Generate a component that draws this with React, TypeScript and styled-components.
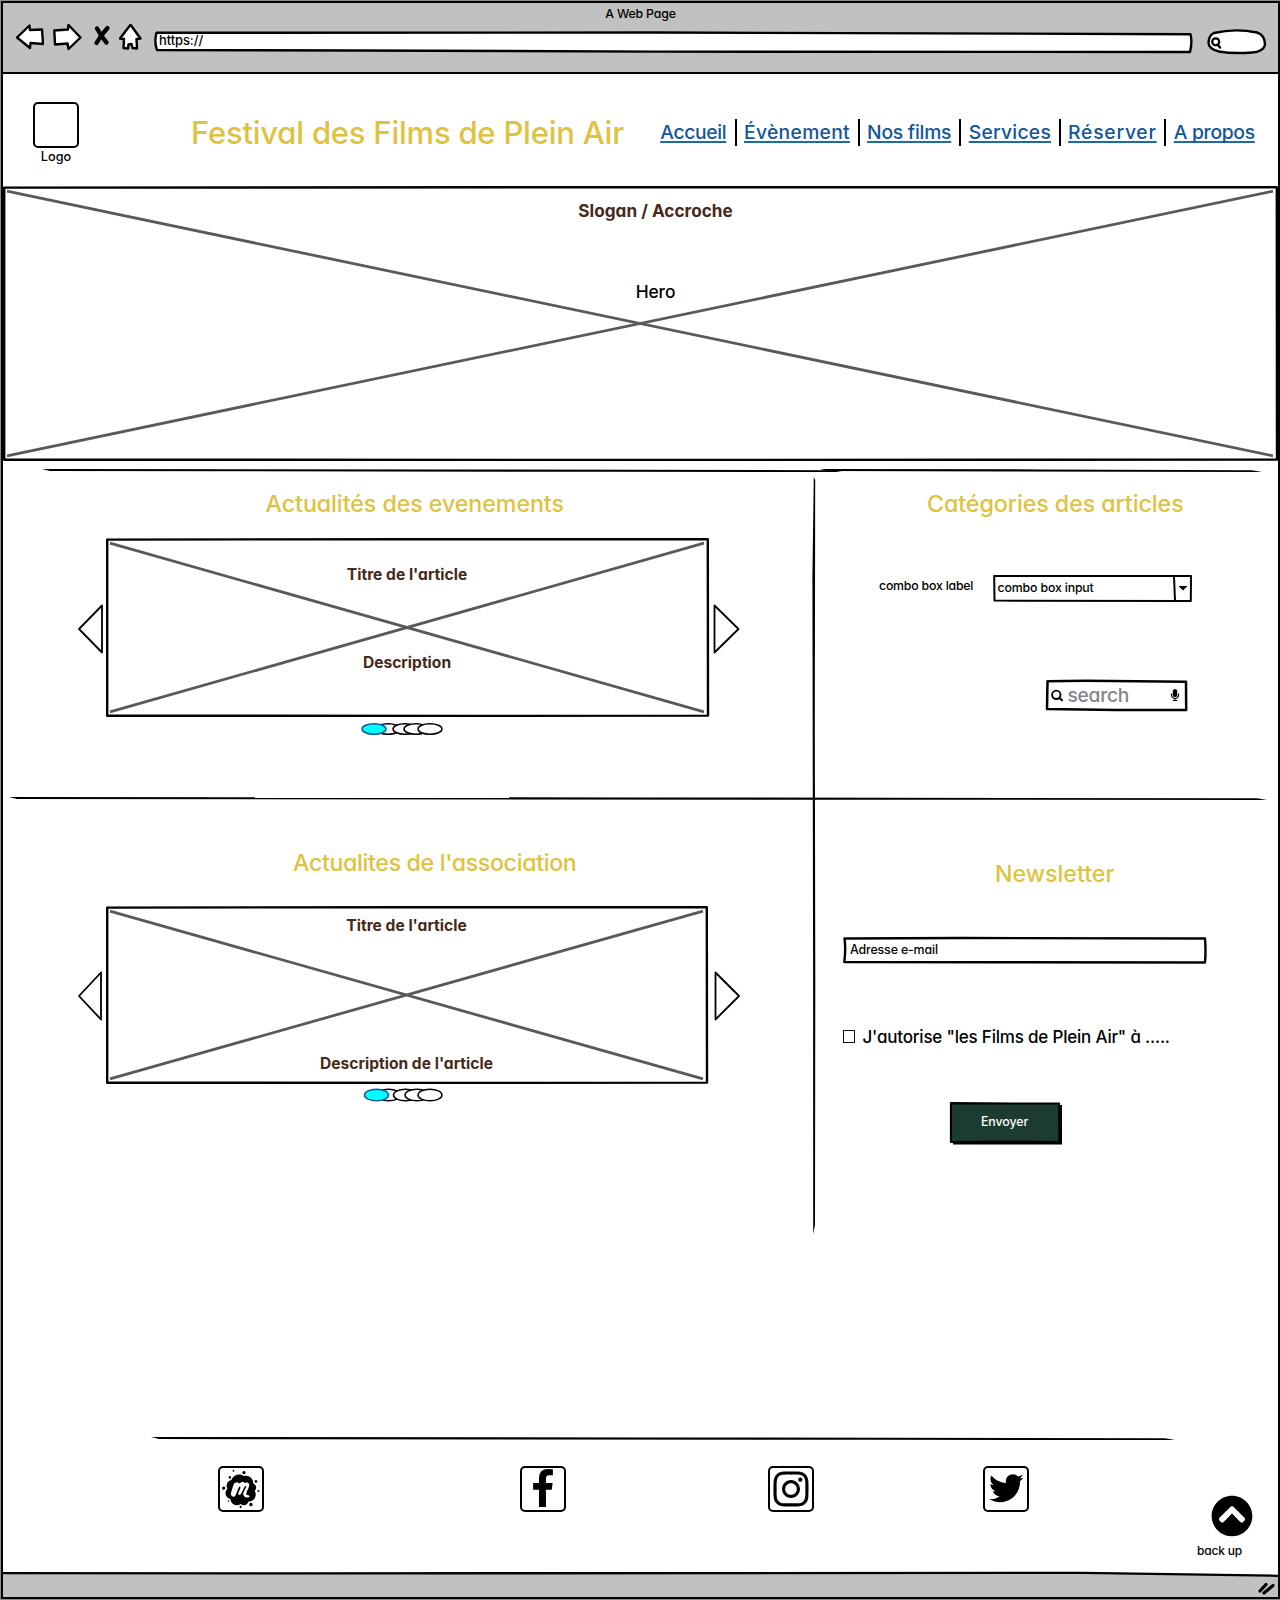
import React from "react";
import styled, { createGlobalStyle } from "styled-components";
import { FaMeetup, FaInstagram, FaTwitter, FaChevronCircleUp, FaMicrophone } from "react-icons/fa";

const ink = "#000";
const gold = "#dfc240";
const brown = "#46291a";

const Global = createGlobalStyle`
  *, *::before, *::after { box-sizing: border-box; }
  body {
    margin: 0;
    background: #8b8d8b;
    color: ${ink};
    font-family: Inter, "Liberation Sans", sans-serif;
    font-feature-settings: "cv11" 1;
  }
  svg { display: block; }
`;

/* ---------- text ---------- */

const Text = styled.span<{ $size?: number; $line?: number; $track?: number; $color?: string; $weight?: number }>`
  display: block;
  white-space: nowrap;
  font-size: ${(p) => p.$size ?? 12.5}px;
  line-height: ${(p) => p.$line ?? 16}px;
  letter-spacing: ${(p) => p.$track ?? 0}px;
  color: ${(p) => p.$color ?? ink};
  font-weight: ${(p) => p.$weight ?? 500};
`;

const Heading = styled.h2<{ $left: number; $track?: number }>`
  margin: 0 0 0 ${(p) => p.$left}px;
  white-space: nowrap;
  font-size: 23.2px;
  font-weight: 500;
  line-height: 32px;
  letter-spacing: ${(p) => p.$track ?? 0}px;
  color: ${gold};
`;

/* ---------- window ---------- */

const Window = styled.div`
  width: 1279px;
  height: 1598px;
  margin: 1px 0 1px 1px;
  display: flex;
  flex-direction: column;
  border: 2px solid ${ink};
  background: #fff;
`;

const Chrome = styled.header`
  height: 71px;
  flex: none;
  background: #c1c1c1;
  border-bottom: 2px solid ${ink};
`;

const WindowTitle = styled(Text)`
  text-align: center;
`;

const Toolbar = styled.div`
  display: flex;
  align-items: flex-start;
  padding-left: 12px;
`;

const ToolIcon = styled.svg<{ $gap?: number }>`
  flex: none;
  margin-left: ${(p) => p.$gap ?? 0}px;
  fill: #fff;
  stroke: ${ink};
  stroke-width: 2.4;
  stroke-linejoin: round;
  stroke-linecap: round;
`;

const Field = styled.div<{ $w: number; $h: number; $pad?: string }>`
  position: relative;
  flex: none;
  display: flex;
  align-items: center;
  width: ${(p) => p.$w}px;
  height: ${(p) => p.$h}px;
  padding: ${(p) => p.$pad ?? "0"};
  > * { position: relative; }
`;

const SketchSvg = styled.svg`
  && { position: absolute; }
  left: 0;
  top: 0;
  overflow: visible;
  stroke-linejoin: round;
  stroke-linecap: round;
`;

function Sketch({ w, h, d, fill = "#fff", stroke = 2.4, children }: {
  w: number; h: number; d: string; fill?: string; stroke?: number; children?: React.ReactNode;
}) {
  return (
    <SketchSvg width={w} height={h} aria-hidden>
      <path d={d} fill={fill} stroke={ink} strokeWidth={stroke} />
      {children}
    </SketchSvg>
  );
}

/* ---------- site header ---------- */

const SiteHeader = styled.div`
  height: 112px;
  flex: none;
  display: flex;
  align-items: flex-start;
  padding-left: 30px;
`;

const Brand = styled.div`
  width: 46px;
  padding-top: 28px;
  display: flex;
  flex-direction: column;
  align-items: center;
`;

const IconTile = styled.div<{ $w?: number; $lift?: number }>`
  width: ${(p) => p.$w ?? 46}px;
  height: 46px;
  flex: none;
  display: flex;
  align-items: center;
  justify-content: center;
  padding-bottom: ${(p) => p.$lift ?? 0}px;
  border: 2px solid ${ink};
  border-radius: 5px;
`;

const SiteTitle = styled.h1`
  width: 461px;
  margin: 39px 0 0 112px;
  white-space: nowrap;
  font-size: 31px;
  line-height: 40px;
  font-weight: 500;
  letter-spacing: -0.22px;
  color: ${gold};
`;

const Nav = styled.nav`
  display: grid;
  grid-template-columns: 82.5px 123px 101.3px 100.2px 104.8px 99px;
  height: 27px;
  margin-top: 45px;
`;

const NavItem = styled.a<{ $track: number }>`
  text-align: center;
  white-space: nowrap;
  font-size: 19.3px;
  line-height: 27px;
  letter-spacing: ${(p) => p.$track}px;
  font-weight: 500;
  color: #11569a;
  text-decoration: underline #1c6aa8 1.5px;
  text-decoration-skip-ink: none;
  text-underline-offset: 1.5px;
  & + & { border-left: 2px solid ${ink}; }
`;

/* ---------- hero and placeholders ---------- */

const Placeholder = styled.div<{ $w: number; $h: number; $gap: number; $pad: string }>`
  position: relative;
  flex: none;
  width: ${(p) => p.$w}px;
  height: ${(p) => p.$h}px;
  display: flex;
  flex-direction: column;
  align-items: center;
  gap: ${(p) => p.$gap}px;
  padding: ${(p) => p.$pad};
  > * { position: relative; }
`;

function Cross({ w, h }: { w: number; h: number }) {
  return (
    <Sketch w={w} h={h} d={`M1.2 1.6 L${w * 0.5} 1.2 L${w - 1.2} 1.3 L${w - 1} ${h - 1.4} L${w * 0.6} ${h - 1.1} L1.2 ${h - 1.3} Z`}>
      <path
        d={`M4 5.2 L${w - 5} ${h - 5.2} M${w - 5} 5.2 L4 ${h - 5.2}`}
        stroke="#595959" strokeWidth={2.8} strokeLinecap="butt" fill="none"
      />
    </Sketch>
  );
}

/* ---------- main area ---------- */

const Main = styled.main`
  position: relative;
  flex: 1;
`;

const Rule = styled.svg<{ $left?: number }>`
  flex: none;
  overflow: visible;
  margin-left: ${(p) => p.$left ?? 0}px;
  fill: ${ink};
`;

const RuleRow = styled.div<{ $h: number; $pad?: number }>`
  display: flex;
  height: ${(p) => p.$h}px;
  padding-top: ${(p) => p.$pad ?? 0}px;
`;

function Line({ w, left }: { w: number; left: number }) {
  return (
    <Rule width={w} height={4} $left={left}>
      <path d={`M0 0 L${w * 0.5} 0.4 L${w - 10} 1.2 L${w} 3 L${w * 0.7} 2.8 L8 2.1 Z`} />
    </Rule>
  );
}

const Divider = styled.svg`
  position: absolute;
  left: 809px;
  top: 16px;
`;

const Columns = styled.div<{ $h: number }>`
  display: grid;
  grid-template-columns: 810px 1fr;
  height: ${(p) => p.$h}px;
`;

const Panel = styled.section<{ $top: number }>`
  padding-top: ${(p) => p.$top}px;
`;

const Carousel = styled.div<{ $top: number; $left: number }>`
  display: flex;
  align-items: center;
  margin: ${(p) => p.$top}px 0 0 ${(p) => p.$left}px;
`;

const Arrow = styled.svg<{ $gap?: number; $before?: number }>`
  flex: none;
  overflow: visible;
  margin: 2px ${(p) => p.$gap ?? 0}px 0 ${(p) => p.$before ?? 0}px;
  fill: #fff;
  stroke: ${ink};
  stroke-width: 1.8;
  stroke-linejoin: round;
`;

const Dots = styled.svg<{ $left: number; $top: number }>`
  margin: ${(p) => p.$top}px 0 0 ${(p) => p.$left}px;
  overflow: visible;
  stroke: ${ink};
  stroke-width: 1.5;
  fill: #fff;
`;

function Pager({ left, top, centers, ry }: { left: number; top: number; centers: number[]; ry: number }) {
  return (
    <Dots width={84} height={14} $left={left} $top={top}>
      {centers.slice(1).map((cx) => <ellipse key={cx} cx={cx} cy={7} rx={12} ry={ry} />)}
      <ellipse cx={centers[0]} cy={7} rx={12} ry={ry} fill="#00ffff" stroke="#0a5a9c" />
    </Dots>
  );
}

const Row = styled.div<{ $top: number; $left: number; $gap?: number; $align?: string }>`
  display: flex;
  align-items: ${(p) => p.$align ?? "center"};
  gap: ${(p) => p.$gap ?? 0}px;
  margin: ${(p) => p.$top}px 0 0 ${(p) => p.$left}px;
`;

const Push = styled.div`
  margin-left: auto;
`;

const CheckBox = styled.span`
  width: 12px;
  height: 13px;
  border: 1px solid #111;
`;

/* ---------- footer ---------- */

const Footer = styled.footer`
  height: 137px;
  flex: none;
  display: flex;
  flex-direction: column;
`;

const Socials = styled.div`
  display: flex;
  align-items: flex-start;
  padding: 25px 0 0 215px;
`;

const Spacer = styled.div<{ $w: number }>`
  flex: none;
  width: ${(p) => p.$w}px;
`;

const BackUp = styled.a`
  padding-top: 28.5px;
  width: 62px;
  display: flex;
  flex-direction: column;
  > svg { margin: 0 0 6px 13.5px; }
`;

const StatusBar = styled.div`
  height: 24px;
  flex: none;
  position: relative;
  background: #c1c1c1;
`;

const articleText = { $size: 15.6, $line: 20, $color: brown, $weight: 700 };

export default function App() {
  return (
    <>
      <Global />
      <Window>
        <Chrome>
          <WindowTitle $size={12.3} $line={21} $track={-0.15}>A Web Page</WindowTitle>
          <Toolbar>
            <ToolIcon width={29} height={28}>
              <path d="M2 13.5 L14.5 1.5 L15 6 L27 5.5 L28 20 L15.5 19 L15 24 Z" />
            </ToolIcon>
            <ToolIcon width={29} height={28} $gap={9}>
              <path d="M1.3 6.5 L15 5.5 L15.5 1 L27.5 13.5 L15.5 25 L14.5 19.5 L2 20.5 Z" />
            </ToolIcon>
            <ToolIcon width={18} height={28} $gap={11}>
              <path d="M4 4.5 Q8 12 13.5 18.5 M14.5 4 Q8 11 3.5 19" strokeWidth={4.3} fill="none" />
            </ToolIcon>
            <ToolIcon width={25} height={28} $gap={7.5}>
              <path d="M11.5 0.8 L21.5 14.5 L17.5 15 L18 24.5 L13.5 24 L12.5 20 L9.5 20.5 L9 24.5 L4.5 24 L5 15 L1 14.5 Z" />
            </ToolIcon>
            <Spacer $w={10} />
            <Row $top={7.5} $left={0}>
              <Field $w={1040} $h={20} $pad="0 0 1px 5.5px">
                <Sketch
                  w={1040} h={20}
                  d="M2.5 0.8 L500 0.5 L1036.5 2.2 Q1038.5 10 1036 20 L500 19.6 L200 18.5 L3 18 Q0 10 2.5 0.8 Z"
                />
                <Text $size={12.9} $track={-0.05}>https://</Text>
              </Field>
            </Row>
            <Row $top={5.5} $left={13.5}>
              <Field $w={59} $h={24}>
                <Sketch w={59} h={24} d="M7 3 Q28 -2 50 2.5 Q58 5 58 15 Q56 22 45 22.5 Q25 24 12 21.5 Q1.5 19 1.5 12.5 Q2 5 7 3 Z">
                  <circle cx={8.7} cy={11.8} r={3.5} fill="none" stroke={ink} strokeWidth={2.2} />
                  <path d="M11 15 L13 17.5" stroke={ink} strokeWidth={2.4} />
                </Sketch>
              </Field>
            </Row>
          </Toolbar>
        </Chrome>

        <SiteHeader>
          <Brand>
            <IconTile />
            <Text $size={12.7} $line={17}>Logo</Text>
          </Brand>
          <SiteTitle>Festival des Films de Plein Air</SiteTitle>
          <Nav>
            <NavItem $track={-0.35}>Accueil</NavItem>
            <NavItem $track={0.3}>Évènement</NavItem>
            <NavItem $track={-0.25}>Nos films</NavItem>
            <NavItem $track={0.25}>Services</NavItem>
            <NavItem $track={0.75}>Réserver</NavItem>
            <NavItem $track={-0.3}>A propos</NavItem>
          </Nav>
        </SiteHeader>

        <Placeholder $w={1275} $h={275} $gap={61} $pad="14.5px 0 0 30px">
          <Cross w={1275} h={275} />
          <Text $size={17.2} $line={20} $color={brown} $weight={700}>Slogan / Accroche</Text>
          <Text $size={17.4} $line={20} $track={-0.1}>Hero</Text>
        </Placeholder>

        <Main>
          <RuleRow $h={11} $pad={7.5}>
            <Line w={800} left={39} />
            <Line w={442} left={-22} />
          </RuleRow>
          <Columns $h={325}>
            <Panel $top={16}>
              <Heading $left={262.5} $track={-0.05}>Actualités des evenements</Heading>
              <Carousel $top={18} $left={74.5}>
                <Arrow width={25} height={48} $gap={3}><path d="M1 24 L24 0.5 V47.5 Z" /></Arrow>
                <Placeholder $w={603} $h={179} $gap={68} $pad="27px 0 0 0">
                  <Cross w={603} h={179} />
                  <Text {...articleText}>Titre de l'article</Text>
                  <Text {...articleText}>Description</Text>
                </Placeholder>
                <Arrow width={26} height={48} $before={4}><path d="M25.5 24 L1.5 0.5 V47.5 Z" /></Arrow>
              </Carousel>
              <Pager left={358} top={5} centers={[13, 27, 44, 55, 69]} ry={5.3} />
            </Panel>
            <Panel $top={16}>
              <Heading $left={114} $track={-0.05}>Catégories des articles</Heading>
              <Row $top={55} $left={66} $gap={19.3} $align="flex-start">
                <Text $size={12.3} $line={22} $track={-0.2}>combo box label</Text>
                <Field $w={199} $h={27} $pad="0 0 1px 5px">
                  <Sketch w={199} h={27} d="M1.2 1 L198 1 L197.8 26 L1.5 25.6 Z" stroke={2}>
                    <path d="M181 1 L182 26" stroke={ink} strokeWidth={2} />
                    <path d="M185.5 11 L194.5 11 L190 15.5 Z" fill={ink} />
                  </Sketch>
                  <Text $size={12.3} $track={-0.15}>combo box input</Text>
                </Field>
              </Row>
              <Row $top={78} $left={232.5}>
                <Field $w={141} $h={31} $pad="0 6px 1px 22px">
                  <Sketch w={141} h={31} d="M1.5 1.2 L40 0.8 L140 1.8 L140.2 30 L70 30 L1 29 Z" stroke={2.5}>
                    <circle cx={10.3} cy={14.8} r={4.2} fill="none" stroke={ink} strokeWidth={1.9} />
                    <path d="M13.5 18 L16 20.3" stroke={ink} strokeWidth={2.2} />
                  </Sketch>
                  <Text $size={19.2} $line={24} $track={-0.25} $color="#85838c">search</Text>
                  <Push><FaMicrophone size={12} /></Push>
                </Field>
              </Row>
            </Panel>
          </Columns>
          <RuleRow $h={4}>
            <Line w={1258} left={6} />
          </RuleRow>
          <Columns $h={630}>
            <Panel $top={46}>
              <Heading $left={290} $track={-0.35}>Actualites de l'association</Heading>
              <Carousel $top={27} $left={74.5}>
                <Arrow width={24} height={48} $gap={4}><path d="M1 24 L23 0.5 V47.5 Z" /></Arrow>
                <Placeholder $w={602} $h={178} $gap={118} $pad="10px 0 0 0">
                  <Cross w={602} h={178} />
                  <Text {...articleText}>Titre de l'article</Text>
                  <Text {...articleText}>Description de l'article</Text>
                </Placeholder>
                <Arrow width={25} height={48} $before={6}><path d="M25 24 L1.5 0.5 V47.5 Z" /></Arrow>
              </Carousel>
              <Pager left={361} top={4} centers={[12.5, 24.5, 41.5, 53, 66]} ry={5.8} />
            </Panel>
            <Panel $top={57}>
              <Heading $left={182}>Newsletter</Heading>
              <Row $top={46.5} $left={30}>
                <Field $w={364} $h={27} $pad="0 0 1px 7px">
                  <Sketch w={364} h={27} d="M1.5 1.5 L120 1 L362 1.5 Q363 14 362 25.5 L150 25.2 L1.3 25 Q3 12 1.5 1.5 Z" />
                  <Text $size={12.4} $track={-0.15}>Adresse e-mail</Text>
                </Field>
              </Row>
              <Row $top={61} $left={29.5} $gap={8}>
                <CheckBox />
                <Text $size={17} $line={24} $track={-0.2}>J'autorise "les Films de Plein Air" à .....</Text>
              </Row>
              <Row $top={53} $left={137}>
                <Field $w={110} $h={41} $pad="0 0 0 31px">
                  <SketchSvg width={113} height={44}>
                    <path d="M3 3 H112 V42.5 H3 Z" fill={ink} />
                    <path d="M1 1.2 L60 1.5 L109 1.5 L109.5 40 L60 39.5 L1 40 Z" fill="#1d3c30" stroke={ink} strokeWidth={2.2} />
                  </SketchSvg>
                  <Text $size={12.4} $track={-0.1} $color="#fff">Envoyer</Text>
                </Field>
              </Row>
            </Panel>
          </Columns>
          <Divider width={4} height={758}>
            <path d="M1.8 0 L3.2 3 L2.8 250 L3.3 500 L3 748 L1.2 757 L1.1 500 L0.4 100 Z" />
          </Divider>
        </Main>

        <Footer>
          <RuleRow $h={5} $pad={0.8}>
            <Line w={1024} left={148} />
          </RuleRow>
          <Socials>
            <IconTile><FaMeetup size={38} /></IconTile>
            <Spacer $w={256} />
            <IconTile $lift={2}>
              <svg width={20} height={38} viewBox="479 0 864 1664">
                <path d="M1343 12v264h-157q-86 0-116 36t-30 108v189h293l-39 296h-254v759h-306v-759h-255v-296h255v-218q0-186 104-288.5t277-102.5q147 0 228 12z" />
              </svg>
            </IconTile>
            <Spacer $w={202} />
            <IconTile $lift={1}><FaInstagram size={40} /></IconTile>
            <Spacer $w={169} />
            <IconTile $lift={1}><FaTwitter size={34.5} /></IconTile>
            <Spacer $w={168} />
            <BackUp>
              <FaChevronCircleUp size={42} />
              <Text $size={12} $track={-0.2}>back up</Text>
            </BackUp>
          </Socials>
        </Footer>

        <StatusBar>
          <SketchSvg width={1275} height={25}>
            <path d="M0 -0.5 L300 0 L1080 -0.2 L1275 2.5 V-6 H0 Z" fill="#fff" />
            <path d="M0 0.2 L300 0.4 L1080 -0.2 L1275 2.8" fill="none" stroke={ink} strokeWidth={2.3} />
            <path d="M1257 18 L1263 11.5 M1261 20 L1270 12.5" stroke={ink} strokeWidth={3.2} />
          </SketchSvg>
        </StatusBar>
      </Window>
    </>
  );
}
